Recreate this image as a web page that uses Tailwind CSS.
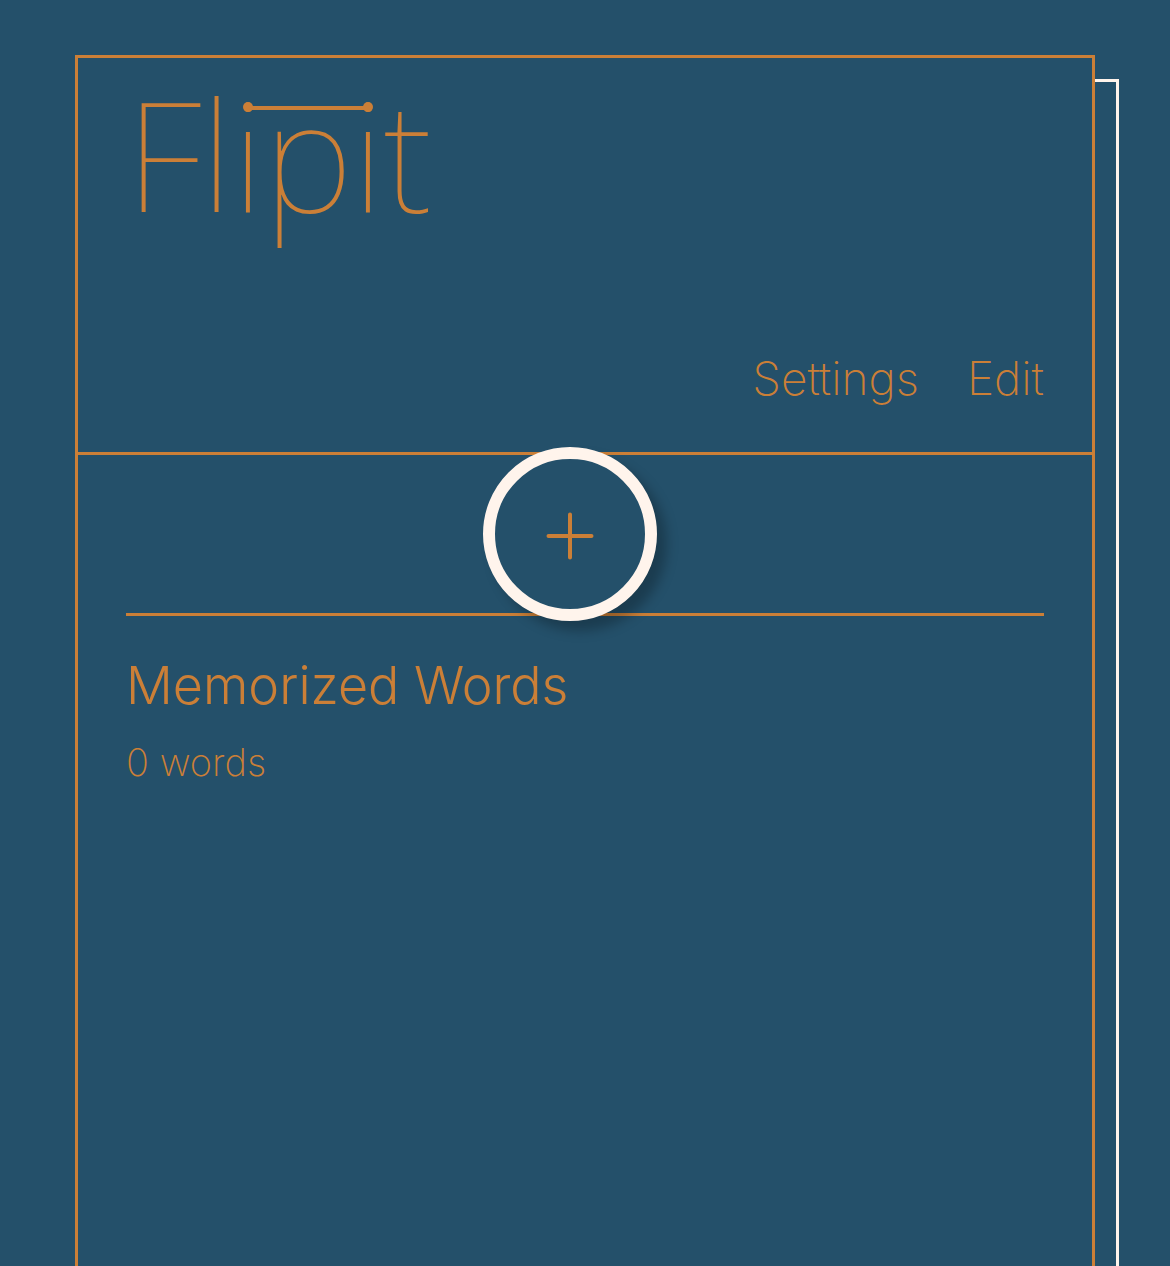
<!DOCTYPE html>
<html lang="en">
<head>
<meta charset="utf-8">
<meta name="viewport" content="width=device-width, initial-scale=1">
<title>Flipit</title>
<script src="https://cdn.jsdelivr.net/npm/@tailwindcss/browser@4"></script>
</head>
<body class="bg-[#24506a] font-['Inter',sans-serif] text-[#cb7f37]">
<div class="flex h-screen flex-col overflow-hidden px-[75px] pt-[55px]">
  <div class="relative flex flex-1 flex-col">
    <!-- second card peeking out behind the first -->
    <div class="absolute top-6 -right-6 bottom-0 w-6 border-t-3 border-r-3 border-[#fff4ec]"></div>
    <main class="flex flex-1 flex-col border-x-3 border-t-3 border-[#cb7f37]">
      <header class="flex h-[397px] flex-col justify-between border-b-3 border-[#cb7f37] px-12 pt-5 pb-[46px]">
        <h1 class="relative self-start font-['Noto_Sans',sans-serif] text-[152px] leading-[152px] font-thin">Flipit
          <!-- bar joining the dots of the two i's -->
          <svg class="absolute top-[23px] left-[117px] h-3 w-[130px]" viewBox="0 0 130 12" fill="currentColor" aria-hidden="true"><circle cx="5" cy="6" r="5"/><circle cx="125" cy="6" r="5"/><rect x="5" y="5" width="120" height="4"/></svg>
        </h1>
        <nav class="flex justify-end gap-12 text-[46px] leading-[56px] font-extralight">
          <a href="#settings">Settings</a>
          <a href="#edit">Edit</a>
        </nav>
      </header>
      <div class="mx-12 flex h-[161px] justify-center border-b-3 border-[#cb7f37]">
        <button type="button" aria-label="Add word" class="relative -mt-2 mr-[30px] flex size-[174px] shrink-0 items-center justify-center rounded-full border-12 border-[#fff4ec] bg-[#24506a] shadow-[10px_10px_12px_rgba(0,0,0,0.25)]">
          <svg class="mt-1 size-12" viewBox="0 0 48 48" fill="none" stroke="currentColor" stroke-width="4" stroke-linecap="round" aria-hidden="true"><path d="M24 2.500v43M2.500 24h43"/></svg>
        </button>
      </div>
      <section class="px-12 pt-[38px]">
        <h2 class="text-[52px] leading-[64px] font-light">Memorized Words</h2>
        <p class="mt-4 text-[38px] leading-[56px] font-extralight">0 words</p>
      </section>
    </main>
  </div>
</div>
</body>
</html>
